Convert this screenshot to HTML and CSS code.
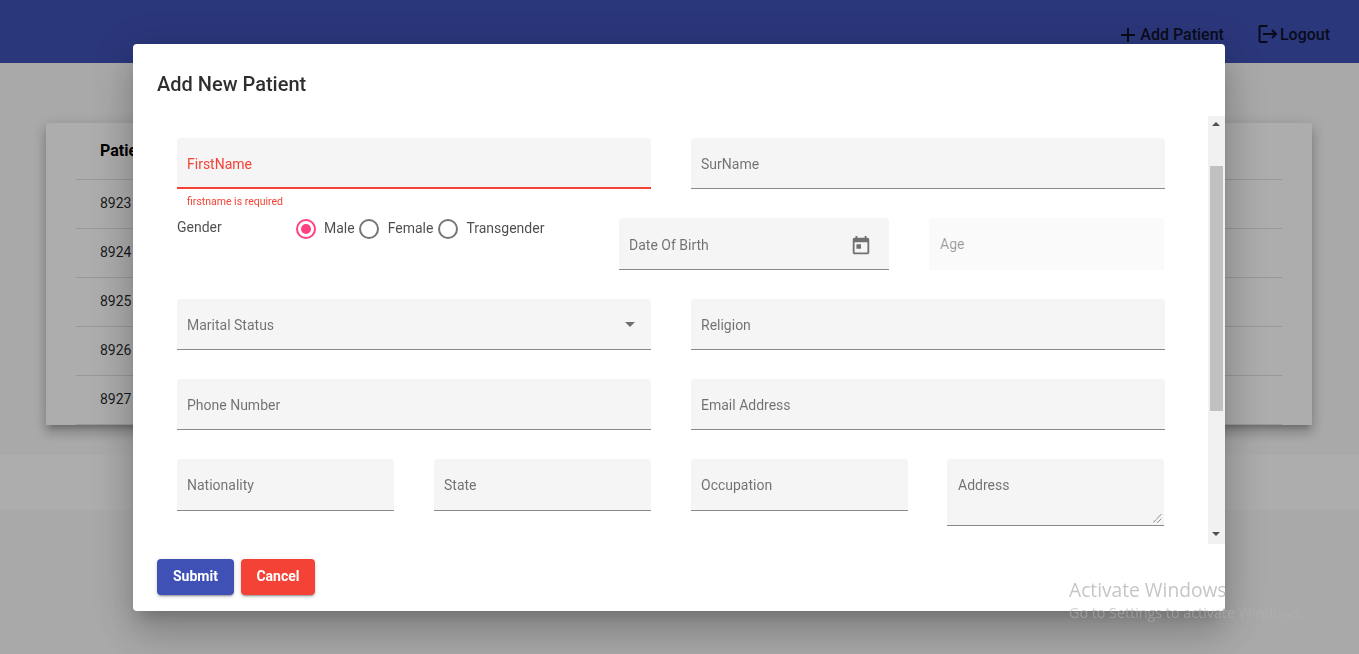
FILE: index.html
```html
<!DOCTYPE html>
<html lang="en">
<head>
<meta charset="utf-8">
<title>Add New Patient</title>
<link rel="stylesheet" href="styles.css">
</head>
<body>
<header class="toolbar">
  <a class="nav-item nav-add">
    <svg class="nav-icon" viewBox="0 0 24 24"><path d="M19 13h-6v6h-2v-6H5v-2h6V5h2v6h6z"/></svg>
    <span>Add Patient</span>
  </a>
  <a class="nav-item nav-logout">
    <svg class="logout-icon" viewBox="0 0 20 20"><path d="M9.500 2H2.500a1 1 0 0 0-1 1v14a1 1 0 0 0 1 1h7"/><path d="M5 10h13M14 6l4 4-4 4"/></svg>
    <span>Logout</span>
  </a>
</header>
<main class="page">
  <section class="card">
    <div class="row row-head">Patient Id</div>
    <div class="row">8923</div>
    <div class="row">8924</div>
    <div class="row">8925</div>
    <div class="row">8926</div>
    <div class="row">8927</div>
  </section>
  <div class="strip"></div>
</main>
<div class="overlay"></div>
<div class="dialog">
  <h2 class="dialog-title">Add New Patient</h2>
  <div class="dialog-body">
    <form class="form">
      <div class="form-row row-first">
        <div class="col">
          <div class="field field-error"><span class="label">FirstName</span></div>
          <div class="error-text">firstname is required</div>
        </div>
        <div class="col"><div class="field"><span class="label">SurName</span></div></div>
      </div>
      <div class="form-row row-second">
        <div class="gender">
          <span class="gender-label">Gender</span>
          <div class="radios">
            <span class="radio radio-on"></span><span class="radio-text radio-text-male">Male</span>
            <span class="radio radio-female"></span><span class="radio-text">Female</span>
            <span class="radio"></span><span class="radio-text">Transgender</span>
          </div>
        </div>
        <div class="field field-date">
          <span class="label">Date Of Birth</span>
          <svg class="cal-icon" viewBox="0 0 24 24"><path d="M19 3h-1V1h-2v2H8V1H6v2H5c-1.110 0-1.990.9-1.990 2L3 19c0 1.100.89 2 2 2h14c1.100 0 2-.9 2-2V5c0-1.100-.9-2-2-2zm0 16H5V8h14v11zM7 10h5v5H7z"/></svg>
        </div>
        <div class="field field-age"><span class="label">Age</span></div>
      </div>
      <div class="form-row">
        <div class="col">
          <div class="field field-select">
            <span class="label">Marital Status</span>
            <span class="select-arrow"></span>
          </div>
        </div>
        <div class="col"><div class="field"><span class="label">Religion</span></div></div>
      </div>
      <div class="form-row">
        <div class="col"><div class="field"><span class="label">Phone Number</span></div></div>
        <div class="col"><div class="field"><span class="label">Email Address</span></div></div>
      </div>
      <div class="form-row row-last">
        <div class="col"><div class="field field-tall"><span class="label">Nationality</span></div></div>
        <div class="col"><div class="field field-tall"><span class="label">State</span></div></div>
        <div class="col"><div class="field field-tall"><span class="label">Occupation</span></div></div>
        <div class="col col-addr">
          <div class="field field-area">
            <span class="label">Address</span>
            <svg class="grip" viewBox="0 0 10 10"><path d="M0 9.500 9.500 0M5 9.500 9.500 5"/></svg>
          </div>
        </div>
      </div>
    </form>
    <div class="scrollbar">
      <span class="arrow arrow-up"></span>
      <span class="thumb"></span>
      <span class="arrow arrow-down"></span>
    </div>
  </div>
  <div class="actions">
    <button type="button" class="btn btn-submit">Submit</button>
    <button type="button" class="btn btn-cancel">Cancel</button>
  </div>
</div>
<div class="watermark">
  <div class="wm-title">Activate Windows</div>
  <div class="wm-sub">Go to Settings to activate Windows.</div>
</div>
</body>
</html>
```

FILE: styles.css
```css
* { box-sizing: border-box; }
html, body { height: 100%; }
body {
  margin: 0;
  height: 654px;
  overflow: hidden;
  background: #fafafa;
  font-family: Roboto, "Liberation Sans", sans-serif;
  font-size: 14px;
  color: rgba(0,0,0,.87);
}
.toolbar {
  height: 63px;
  background: #3f51b5;
  display: flex;
  justify-content: flex-end;
  align-items: flex-start;
  padding: 22px 29px 0 0;
  gap: 34px;
}
.nav-item {
  display: flex;
  align-items: center;
  height: 24px;
  font-size: 16px;
  font-weight: 500;
  color: rgba(0,0,0,.8);
}
.nav-icon { width: 24px; height: 24px; margin: 2px 0 0 -4px; fill: currentColor; }
.logout-icon {
  width: 20px;
  height: 20px;
  margin: 0 2px 0 0;
  fill: none;
  stroke: currentColor;
  stroke-width: 2;
}
.page { display: flex; flex-direction: column; }
.card {
  margin: 60px 47px 0 46px;
  height: 302px;
  padding: 8px 30px 0;
  background: #fff;
  box-shadow: 0 5px 5px -3px rgba(0,0,0,.2), 0 8px 10px 1px rgba(0,0,0,.14), 0 3px 14px 2px rgba(0,0,0,.12);
}
.row {
  height: 49px;
  padding: 0 24px 2px;
  display: flex;
  align-items: center;
  border-bottom: 1px solid rgba(0,0,0,.12);
}
.row-head { font-size: 16px; font-weight: 700; padding-bottom: 9px; color: #000; }
.strip { height: 55px; margin-top: 30px; background: #fff; }
.overlay { position: fixed; inset: 0; background: rgba(0,0,0,.32); }
.dialog {
  position: fixed;
  left: 133px;
  top: 44px;
  width: 1092px;
  height: 567px;
  background: #fff;
  border-radius: 4px;
  box-shadow: 0 11px 15px -7px rgba(0,0,0,.2), 0 24px 38px 3px rgba(0,0,0,.14), 0 9px 46px 8px rgba(0,0,0,.12);
  display: flex;
  flex-direction: column;
}
.dialog-title {
  margin: 0;
  padding: 28px 24px 0;
  height: 72px;
  font-size: 20px;
  line-height: 24px;
  font-weight: 500;
  color: rgba(0,0,0,.82);
}
.dialog-body { display: flex; height: 428px; overflow: hidden; }
.form {
  width: 1075px;
  padding: 22px 43px 0 44px;
  display: flex;
  flex-direction: column;
}
.form-row { flex: none; display: flex; gap: 40px; margin-bottom: 29px; }
.row-first { margin-bottom: 0; height: 80px; }
.row-second { height: 52px; }
.col { flex: 1 1 0; min-width: 0; }
.col-addr { margin: 0 1px 0 -1px; }
.field {
  position: relative;
  height: 51px;
  background: #f5f5f5;
  border-radius: 4px 4px 0 0;
  border-bottom: 1px solid #8a8a8a;
  padding: 18px 10px 0;
  line-height: 16px;
}
.field-tall { height: 52px; }
.label { color: rgba(0,0,0,.54); }
.field-error { border-bottom: 2px solid #f44336; }
.field-error .label { color: #f44336; }
.error-text {
  padding: 7px 10px 0;
  font-size: 10.5px;
  line-height: 12px;
  color: #f44336;
}
.gender { width: 402px; display: flex; }
.gender-label { width: 119px; padding-top: 1px; line-height: 16px; color: rgba(0,0,0,.7); }
.radios { display: flex; align-items: flex-start; height: 20px; padding-top: 1px; }
.radio {
  position: relative;
  flex: none;
  width: 20px;
  height: 20px;
  border: 2px solid rgba(0,0,0,.54);
  border-radius: 50%;
}
.radio-on { border-color: #ff4081; }
.radio-on::after {
  content: "";
  position: absolute;
  inset: 3px;
  border-radius: 50%;
  background: #ff4081;
}
.radio-text { padding: 1px 5px 0 8px; line-height: 16px; color: rgba(0,0,0,.7); }
.radio-text-male { padding-right: 4px; }
.radio-female { margin-right: 1px; }
.field-date { width: 270px; height: 52px; padding-top: 19px; }
.field-age { width: 235px; height: 52px; padding-left: 11px; background: #fafafa; border-bottom: 0; }
.field-age .label { color: rgba(0,0,0,.38); }
.cal-icon { position: absolute; right: 17px; top: 17px; width: 22px; height: 22px; fill: rgba(0,0,0,.54); }
.select-arrow {
  position: absolute;
  right: 16px;
  top: 23px;
  border-left: 5px solid transparent;
  border-right: 5px solid transparent;
  border-top: 5px solid rgba(0,0,0,.54);
}
.field-area { height: 67px; padding-left: 11px; }
.grip {
  position: absolute;
  right: 2px;
  bottom: 2px;
  width: 9px;
  height: 9px;
  fill: none;
  stroke: #444;
  stroke-width: 1;
  stroke-dasharray: 1 .5;
}
.scrollbar {
  position: relative;
  width: 17px;
  background: #f1f1f1;
  flex: none;
}
.thumb { position: absolute; left: 2px; right: 2px; top: 50px; height: 245px; background: #c1c1c1; }
.arrow {
  position: absolute;
  left: 4px;
  border-left: 4px solid transparent;
  border-right: 4px solid transparent;
}
.arrow-up { top: 6px; border-bottom: 4px solid #505050; }
.arrow-down { bottom: 8px; border-top: 4px solid #505050; }
.actions { display: flex; gap: 7px; padding: 15px 24px 0; }
.btn {
  height: 36px;
  border: 0;
  border-radius: 4px;
  padding: 0 16px 2px;
  color: #fff;
  font-family: inherit;
  font-size: 14px;
  font-weight: 700;
  box-shadow: 0 3px 1px -2px rgba(0,0,0,.2), 0 2px 2px 0 rgba(0,0,0,.14), 0 1px 5px 0 rgba(0,0,0,.12);
}
.btn-submit { background: #3f51b5; }
.btn-cancel { background: #f44336; width: 74px; padding: 0 0 2px; }
.watermark {
  position: fixed;
  left: 1069px;
  top: 578px;
  color: rgba(174,174,174,.72);
  font-family: "Open Sans", "Liberation Sans", sans-serif;
  white-space: nowrap;
  pointer-events: none;
}
.wm-title { font-size: 19.2px; line-height: 24px; }
.wm-sub { font-size: 14.3px; line-height: 21px; color: rgba(174,174,174,.6); }
```
